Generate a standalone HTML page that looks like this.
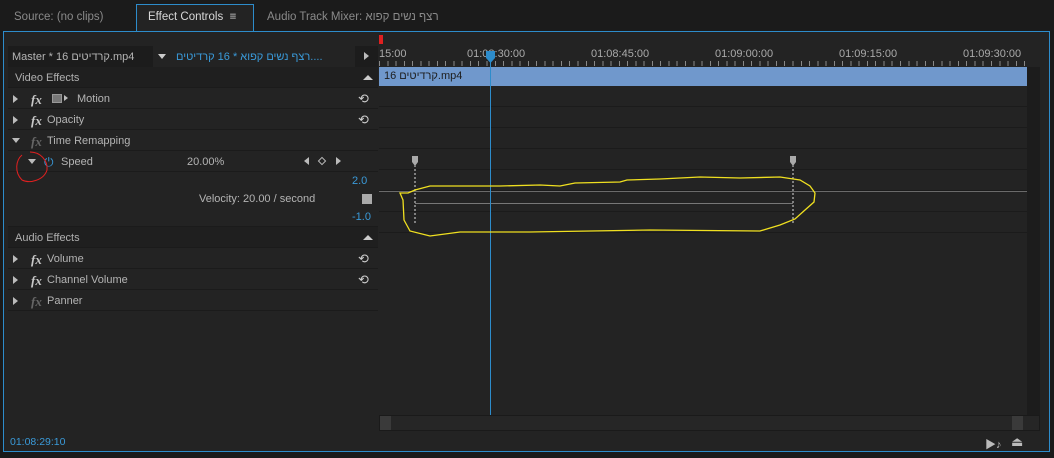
<!DOCTYPE html>
<html><head><meta charset="utf-8"><style>
*{margin:0;padding:0;box-sizing:border-box}
body{width:1054px;height:458px;background:#1a1a1a;font-family:"Liberation Sans","Noto Sans CJK SC",sans-serif;font-size:11px;color:#b4b4b4;position:relative;overflow:hidden}
.a{position:absolute}
.tab{position:absolute;top:4px;height:27px;line-height:27px;font-size:11.5px;color:#8a8a8a}
.row{position:absolute;left:8px;width:370px;height:21px;line-height:23px;border-bottom:1px solid #1b1b1b;background:#232323}
.hdr{background:#1f1f1f;color:#b0b0b0}
.tri{position:absolute;width:0;height:0;border-top:4px solid transparent;border-bottom:4px solid transparent;border-left:5px solid #bbb;top:7px;left:5px}
.trid{position:absolute;width:0;height:0;border-left:4px solid transparent;border-right:4px solid transparent;border-top:5px solid #bbb;top:8px;left:4px}
.fx{position:absolute;left:23px;font-style:italic;font-family:"Liberation Serif",serif;font-size:13px;font-weight:bold;color:#c8c8c8}
.lbl{position:absolute;left:39px}
.rst{position:absolute;left:350px;top:-1px;font-size:13px;color:#ccc}
.tl{position:absolute;left:379px;width:648px;height:21px;border-bottom:1px solid #1b1b1b;background:#232323}
</style></head><body>
<div class="a" style="left:0;top:0;width:1054px;height:31px;background:#1b1b1b"></div>
<div class="tab" style="left:14px">Source: (no clips)</div>
<div class="a" style="left:136px;top:4px;width:118px;height:28px;background:#232323;border:1px solid #2d8ccb;border-bottom:none"></div>
<div class="tab" style="left:148px;color:#d8d8d8">Effect Controls &nbsp;≡</div>
<div class="tab" style="left:267px">Audio Track Mixer: רצף נשים קפוא</div>
<div class="a" style="left:3px;top:31px;width:1047px;height:421px;background:#232323;border:1px solid #2d8ccb"></div>
<div class="a" style="left:8px;top:46px;width:145px;height:21px;background:#1c1c1c;line-height:23px;padding-left:4px">Master * 16 קרדיטים.mp4</div>
<div class="a" style="left:158px;top:54px;border-left:4px solid transparent;border-right:4px solid transparent;border-top:5px solid #ccc"></div>
<div class="a" style="left:176px;top:46px;line-height:23px;color:#3a9ad9">רצף נשים קפוא * 16 קרדיטים....</div>
<div class="a" style="left:355px;top:46px;width:23px;height:21px;background:#1c1c1c"></div>
<div class="a" style="left:364px;top:52px;border-top:4px solid transparent;border-bottom:4px solid transparent;border-left:5px solid #bbb"></div>
<div class="row hdr" style="top:67px"><span style="position:absolute;left:7px">Video Effects</span><span style="position:absolute;left:355px;top:8px;border-left:5px solid transparent;border-right:5px solid transparent;border-bottom:5px solid #ccc"></span></div>
<div class="row" style="top:88px"><div class="tri"></div><span class="fx">fx</span><span class="a" style="left:44px;top:6px;width:10px;height:9px;background:#777;border:1px solid #999"></span><span class="a" style="left:56px;top:7px;border-top:3px solid transparent;border-bottom:3px solid transparent;border-left:4px solid #bbb"></span><span class="lbl" style="left:69px">Motion</span><span class="rst">⟲</span></div>
<div class="row" style="top:109px"><div class="tri"></div><span class="fx">fx</span><span class="lbl">Opacity</span><span class="rst">⟲</span></div>
<div class="row" style="top:130px"><div class="trid"></div><span class="fx" style="color:#666">fx</span><span class="lbl">Time Remapping</span></div>
<div class="row" style="top:151px"><div class="trid" style="left:20px"></div><span class="a" style="left:36px;color:#3a9ad9;font-size:12px">⏻</span><span class="lbl" style="left:53px">Speed</span><span class="a" style="left:179px">20.00%</span><span class="a" style="left:296px;top:6px;border-top:4px solid transparent;border-bottom:4px solid transparent;border-right:5px solid #bbb"></span><span class="a" style="left:311px;top:7px;width:6px;height:6px;border:1px solid #bbb;transform:rotate(45deg)"></span><span class="a" style="left:328px;top:6px;border-top:4px solid transparent;border-bottom:4px solid transparent;border-left:5px solid #bbb"></span></div>
<div class="row" style="top:172px;height:55px;line-height:21px"><span class="a" style="left:344px;top:-1px;color:#3a9ad9">2.0</span><span class="a" style="left:191px;top:17px">Velocity: 20.00 / second</span><span class="a" style="left:354px;top:22px;width:10px;height:10px;background:#aaa"></span><span class="a" style="left:344px;top:35px;color:#3a9ad9">-1.0</span></div>
<div class="row hdr" style="top:227px"><span style="position:absolute;left:7px">Audio Effects</span><span style="position:absolute;left:355px;top:8px;border-left:5px solid transparent;border-right:5px solid transparent;border-bottom:5px solid #ccc"></span></div>
<div class="row" style="top:248px"><div class="tri"></div><span class="fx">fx</span><span class="lbl">Volume</span><span class="rst">⟲</span></div>
<div class="row" style="top:269px"><div class="tri"></div><span class="fx">fx</span><span class="lbl">Channel Volume</span><span class="rst">⟲</span></div>
<div class="row" style="top:290px"><div class="tri"></div><span class="fx" style="color:#666">fx</span><span class="lbl">Panner</span></div>
<div class="a" style="left:379px;top:35px;width:4px;height:9px;background:#e02020"></div>
<div class="a" style="left:379px;top:46px;width:648px;height:21px;background:#232323;font-size:11px;color:#aaa">
<span class="a" style="left:0;top:2px">15:00</span><span class="a" style="left:88px;top:2px">01:08:30:00</span><span class="a" style="left:212px;top:2px">01:08:45:00</span><span class="a" style="left:336px;top:2px">01:09:00:00</span><span class="a" style="left:460px;top:2px">01:09:15:00</span><span class="a" style="left:584px;top:2px">01:09:30:00</span>
<div class="a" style="left:0;top:15px;width:648px;height:5px;background:repeating-linear-gradient(90deg,#888 0 1px,transparent 1px 8.27px)"></div></div>
<div class="a" style="left:379px;top:67px;width:648px;height:19px;background:#7098cc;color:#1d1d1d;line-height:19px;padding-left:5px">16 קרדיטים.mp4</div>
<div class="tl" style="top:86px;height:21px"></div><div class="tl" style="top:107px"></div><div class="tl" style="top:128px"></div><div class="tl" style="top:149px"></div><div class="tl" style="top:170px"></div><div class="tl" style="top:191px"></div><div class="tl" style="top:212px"></div><div class="tl" style="top:233px;height:182px;border:none"></div>
<div class="a" style="left:1027px;top:67px;width:13px;height:348px;background:#1c1c1c"></div>
<div class="a" style="left:379px;top:415px;width:661px;height:16px;background:#262626;border:1px solid #1a1a1a"></div>
<div class="a" style="left:380px;top:416px;width:11px;height:14px;background:#3a3a3a"></div>
<div class="a" style="left:1012px;top:416px;width:11px;height:14px;background:#3a3a3a"></div>
<div class="a" style="left:10px;top:436px;color:#3a9ad9;font-size:10.5px">01:08:29:10</div>
<div class="a" style="left:985px;top:436px;color:#bbb;font-size:11px">▶♪</div>
<div class="a" style="left:1011px;top:434px;color:#bbb;font-size:13px">⏏</div>
<svg class="a" style="left:0;top:0" width="1054" height="458">
<line x1="379" y1="191.5" x2="1027" y2="191.5" stroke="#6a6a6a"/>
<line x1="415" y1="203.5" x2="793" y2="203.5" stroke="#777"/>
<line x1="415" y1="165" x2="415" y2="225" stroke="#ddd" stroke-dasharray="2,2"/>
<line x1="793" y1="165" x2="793" y2="225" stroke="#ddd" stroke-dasharray="2,2"/>
<path d="M412 156h6v6l-3 4l-3-4z M790 156h6v6l-3 4l-3-4z" fill="#aaa"/>
<line x1="490.5" y1="55" x2="490.5" y2="415" stroke="#2d8ccb"/>
<path d="M486 51h9v7l-4.5 5l-4.5-5z" fill="#2d8ccb"/>
<path d="M408 193L415 190L430 186L460 186L500 186L540 185L560 186L570 184L575 183L620 182L627 180L660 179L700 177L740 178L780 177L800 180L810 186L815 193L814 202L805 210L795 219L780 225L760 231L650 230L530 232L460 232L430 236L410 231L404 220L403 200L400 193z" fill="none" stroke="#f0e020" stroke-width="1.3"/>
<path d="M22 155C16 160 14 172 22 180C30 184 44 180 47 170C48 160 40 152 30 152" fill="none" stroke="#e02020" stroke-width="1"/>
</svg>
</body></html>
